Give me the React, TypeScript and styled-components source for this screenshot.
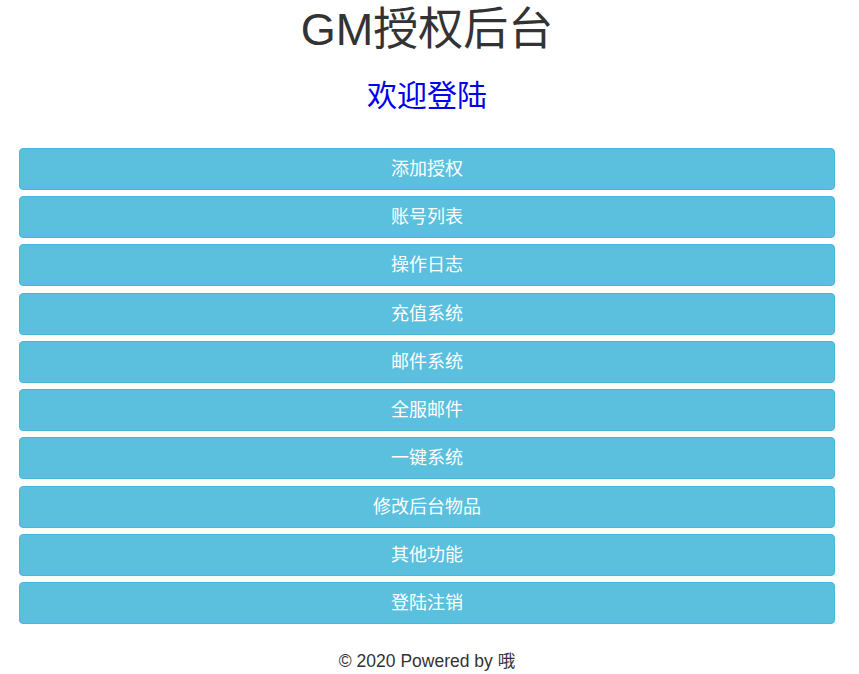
import React from "react";
import styled, { createGlobalStyle } from "styled-components";

const Global = createGlobalStyle`
  html, body { margin: 0; padding: 0; background: #fff; }
  body {
    font-family: "Liberation Sans", Arial, "Noto Sans CJK SC", sans-serif;
    color: #333;
  }
`;

const Page = styled.div`
  padding: 0 24px 0 19px;
  display: flex;
  flex-direction: column;
`;

const Title = styled.h1`
  margin: 6px 0 0;
  font-size: 45px;
  font-weight: 400;
  line-height: 48px;
  text-align: center;
  color: #333;
`;

const Welcome = styled.h2`
  margin: 25px 0 0;
  font-size: 30px;
  font-weight: 400;
  line-height: 34px;
  text-align: center;
  color: #0000ee;
`;

const Menu = styled.nav`
  margin-top: 35px;
  display: flex;
  flex-direction: column;
  gap: 6.22px;
`;

const MenuButton = styled.a`
  display: block;
  box-sizing: border-box;
  height: 42px;
  line-height: 40px;
  background: #5bc0de;
  border: 1px solid #46b8da;
  border-radius: 4px;
  color: #fff;
  font-size: 18px;
  text-align: center;
  text-decoration: none;
  cursor: pointer;
`;

const Footer = styled.footer`
  margin-top: 26px;
  text-align: center;
  font-size: 17.5px;
  line-height: 22px;
  color: #333;
`;

const items = [
  "添加授权",
  "账号列表",
  "操作日志",
  "充值系统",
  "邮件系统",
  "全服邮件",
  "一键系统",
  "修改后台物品",
  "其他功能",
  "登陆注销",
];

export default function App() {
  return (
    <>
      <Global />
      <Page>
        <Title>GM授权后台</Title>
        <Welcome>欢迎登陆</Welcome>
        <Menu>
          {items.map((t) => (
            <MenuButton key={t}>{t}</MenuButton>
          ))}
        </Menu>
        <Footer>© 2020 Powered by 哦</Footer>
      </Page>
    </>
  );
}
